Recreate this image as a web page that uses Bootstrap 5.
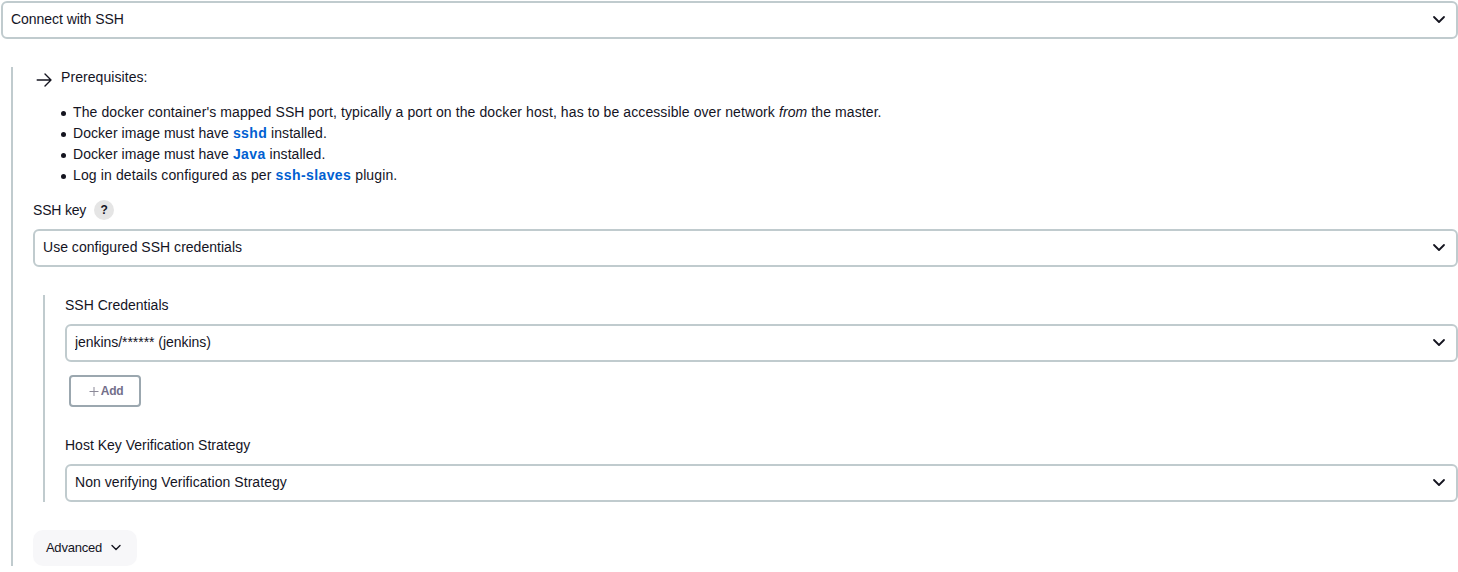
<!DOCTYPE html>
<html lang="en">
<head>
<meta charset="utf-8">
<meta name="viewport" content="width=device-width, initial-scale=1">
<title>Connect with SSH</title>
<link href="https://cdn.jsdelivr.net/npm/bootstrap@5.3.0/dist/css/bootstrap.min.css" rel="stylesheet">
<style>
  body { font: 14px/21px "Liberation Sans", Arial, sans-serif; color: #14141f; background: #fff; overflow: hidden; }
  .jk-form { padding: 1px 0 0 1px; }
  .jk-form .form-select {
    height: 38px; padding: 0 36px 2px 8px; border: 2px solid #c0cbce; border-radius: 6px;
    font-size: 14px; line-height: 21px; color: #14141f; background-color: #fff;
    background-image: url("data:image/svg+xml,%3Csvg xmlns='http://www.w3.org/2000/svg' viewBox='0 0 14 10'%3E%3Cpath d='M2 2l5 5 5-5' fill='none' stroke='%2314141f' stroke-width='1.8' stroke-linecap='round' stroke-linejoin='round'/%3E%3C/svg%3E");
    background-size: 14px 10px; background-position: right 10px center;
  }
  .jk-form #method, .jk-form #cred { letter-spacing: -.05px; }
  .jk-form #key { letter-spacing: .02px; }
  .jk-form #host { letter-spacing: .05px; }
  .nested { border-left: 2px solid #c0cbce; margin: 28px 0 0 10px; padding-left: 20px; }
  .nested label { display: block; line-height: 21px; }
  .key-label { letter-spacing: -.2px; }
  .prereq-text { margin-left: 9px; letter-spacing: .07px; }
  .prereq-list { margin: 14px 0 14px 40px; padding: 0; list-style: none; letter-spacing: .096px; }
  .prereq-list li { position: relative; height: 21px; }
  .prereq-list li:nth-child(2), .prereq-list li:nth-child(3) { letter-spacing: .05px; }
  .prereq-list li:nth-child(4) { letter-spacing: .125px; }
  .prereq-list li::before { content: ""; position: absolute; left: -12px; top: 8.5px; width: 5px; height: 5px; border-radius: 50%; background: #14141f; }
  .prereq-list a { font-weight: bold; letter-spacing: .4px; color: #0060d1; text-decoration: none; }
  .help { width: 20px; height: 20px; margin-top: -1px; background: #e5e5e5; font: bold 12px/20px "Liberation Sans", Arial, sans-serif; }
  .btn-add { width: 72px; height: 32px; margin: 13px 0 28px 4px; padding: 0; border: 2px solid #9ba7af; border-radius: 4px; background: #fff; color: #736f8a; font-size: 12px; font-weight: bold; line-height: 18px; letter-spacing: -.3px; }
  .btn-add svg { margin: 0 2px 0 2px; }
  .btn-advanced { width: 104px; height: 36px; margin-top: 28px; padding: 0 3px 1px 0; border: 0; border-radius: 10px; background: #f7f7f9; color: #14141f; font-size: 13px; line-height: 20px; letter-spacing: -.2px; }
  .btn-advanced svg { margin-left: 9px; }
</style>
</head>
<body>
<form class="jk-form">
  <select class="form-select" id="method" aria-label="Connect method"><option>Connect with SSH</option></select>
  <div class="nested">
    <div class="d-flex">
      <svg width="19" height="21" viewBox="0 0 19 21" fill="none" stroke="#14141f" stroke-width="1.4" stroke-linecap="round" stroke-linejoin="round"><path d="M4.2 13H18M12 7l6 6-6 6"/></svg>
      <div class="prereq-text">Prerequisites:</div>
    </div>
    <ul class="prereq-list">
      <li>The docker container's mapped SSH port, typically a port on the docker host, has to be accessible over network <em>from</em> the master.</li>
      <li>Docker image must have <a href="#">sshd</a> installed.</li>
      <li>Docker image must have <a href="#">Java</a> installed.</li>
      <li>Log in details configured as per <a href="#">ssh-slaves</a> plugin.</li>
    </ul>
    <div class="d-flex align-items-center gap-2 mb-2">
      <label class="key-label" for="key">SSH key</label>
      <span class="help rounded-circle text-center">?</span>
    </div>
    <select class="form-select" id="key"><option>Use configured SSH credentials</option></select>
    <div class="nested">
      <label class="mb-2" for="cred">SSH Credentials</label>
      <select class="form-select" id="cred"><option>jenkins/****** (jenkins)</option></select>
      <button type="button" class="btn-add d-flex align-items-center justify-content-center">
        <svg width="10" height="10" viewBox="0 0 10 10" stroke="#8b8998" stroke-width="1"><path d="M.5 5.5h9M5 1v9"/></svg>Add
      </button>
      <label class="mb-2" for="host">Host Key Verification Strategy</label>
      <select class="form-select" id="host"><option>Non verifying Verification Strategy</option></select>
    </div>
    <button type="button" class="btn-advanced d-flex align-items-center justify-content-center">Advanced
      <svg width="10" height="7" viewBox="0 0 10 7" fill="none" stroke="#14141f" stroke-width="1.4" stroke-linecap="round" stroke-linejoin="round"><path d="M1 1.5l4 4 4-4"/></svg>
    </button>
  </div>
</form>
<script src="https://cdn.jsdelivr.net/npm/bootstrap@5.3.0/dist/js/bootstrap.bundle.min.js"></script>
</body>
</html>
